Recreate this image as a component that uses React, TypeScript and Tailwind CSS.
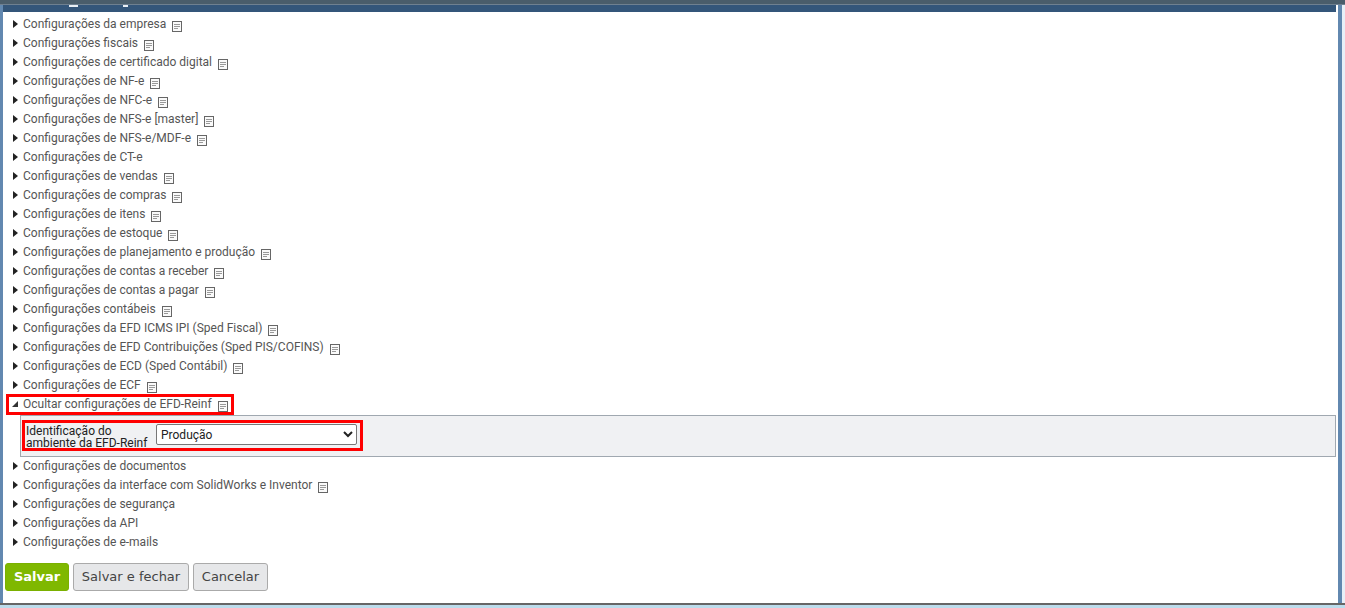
const before = [
  { label: 'Configurações da empresa', doc: true },
  { label: 'Configurações fiscais', doc: true },
  { label: 'Configurações de certificado digital', doc: true },
  { label: 'Configurações de NF-e', doc: true },
  { label: 'Configurações de NFC-e', doc: true },
  { label: 'Configurações de NFS-e [master]', doc: true },
  { label: 'Configurações de NFS-e/MDF-e', doc: true },
  { label: 'Configurações de CT-e', doc: false },
  { label: 'Configurações de vendas', doc: true },
  { label: 'Configurações de compras', doc: true },
  { label: 'Configurações de itens', doc: true },
  { label: 'Configurações de estoque', doc: true },
  { label: 'Configurações de planejamento e produção', doc: true },
  { label: 'Configurações de contas a receber', doc: true },
  { label: 'Configurações de contas a pagar', doc: true },
  { label: 'Configurações contábeis', doc: true },
  { label: 'Configurações da EFD ICMS IPI (Sped Fiscal)', doc: true },
  { label: 'Configurações de EFD Contribuições (Sped PIS/COFINS)', doc: true },
  { label: 'Configurações de ECD (Sped Contábil)', doc: true },
  { label: 'Configurações de ECF', doc: true },
];

const after = [
  { label: 'Configurações de documentos', doc: false },
  { label: 'Configurações da interface com SolidWorks e Inventor', doc: true },
  { label: 'Configurações de segurança', doc: false },
  { label: 'Configurações da API', doc: false },
  { label: 'Configurações de e-mails', doc: false },
];

function DocIcon() {
  return (
    <svg width="10" height="11" viewBox="0 0 10 11" className="ml-[6px] mt-[6px] shrink-0">
      <rect x="0.5" y="0.5" width="9" height="10" fill="#fafafa" stroke="#666" />
      <path d="M2 3.5h6M2 5.5h6M2 7.5h4" stroke="#999" strokeWidth="1" />
    </svg>
  );
}

function Row({ label, doc }: { label: string; doc: boolean }) {
  return (
    <div className="flex h-[19px] items-center pb-[2px] pl-[10px] text-[#555]">
      <span className="mr-[5px] h-0 w-0 border-y-[4px] border-l-[5px] border-y-transparent border-l-[#222]" />
      <span>{label}</span>
      {doc && <DocIcon />}
    </div>
  );
}

export default function App() {
  return (
    <div className="flex h-[608px] flex-col overflow-hidden bg-[#bcdcec] font-['Roboto',sans-serif] text-[12px]">
      <div className="h-[5px] border-b border-[#6f8090] bg-[#4a5d6b]" />
      <div className="flex h-[600px] border-b-2 border-[#666]">
        <div className="w-[3px] bg-[#6288b0]" />
        <div className="flex flex-1 flex-col bg-white">
          {/* bottom edge of the title text, cut off by the scrolled header */}
          <div className="mr-[2px] flex h-[7px] items-start bg-[#34567a]">
            <span className="ml-[66px] h-[2px] w-[9px] bg-[#e8eef4]" />
            <span className="ml-[45px] h-[2px] w-[5px] bg-[#e8eef4]" />
          </div>
          <div className="flex flex-1 flex-col pt-[3px]">
            {before.map((r) => (
              <Row key={r.label} label={r.label} doc={r.doc} />
            ))}
            <div className="ml-[4px] flex h-[19px] w-[226px] items-center whitespace-nowrap pb-[2px] pl-[5px] text-[#555] outline-[3px] -outline-offset-2 outline-[#f00]">
              <span className="mr-[5px] h-0 w-0 border-b-[6px] border-l-[6px] border-b-[#333] border-l-transparent" />
              <span>Ocultar configurações de EFD-Reinf</span>
              <DocIcon />
            </div>
            <div className="ml-[17px] mr-[2px] mt-[1px] h-[42px] border border-[#a0a8b0] bg-[#f0f1f3] pt-[4px] pl-[1px]">
              <div className="flex h-[31px] w-[341px] items-center border-[3px] border-[#f00] pb-[2px] pl-[1px]">
                <label className="mt-[4px] w-[130px] text-[12px] leading-[12px] text-[#222]">
                  Identificação do ambiente da EFD-Reinf
                </label>
                <select className="h-[21px] w-[201px] rounded-[2px] border border-[#777] bg-white text-[12px] text-[#222]">
                  <option>Produção</option>
                </select>
              </div>
            </div>
            {after.map((r) => (
              <Row key={r.label} label={r.label} doc={r.doc} />
            ))}
            <div className="mt-[11px] flex gap-[4px] pl-[2px] font-['DejaVu_Sans',sans-serif]">
              <button className="h-[28px] w-[64px] rounded-[3px] border border-[#7ab000] bg-[#7fb800] text-[13px] font-bold text-white">
                Salvar
              </button>
              <button className="h-[28px] w-[116px] rounded-[3px] border border-[#aaa] bg-[#e6e7e9] text-[13px] text-[#444]">
                Salvar e fechar
              </button>
              <button className="h-[28px] w-[75px] rounded-[3px] border border-[#aaa] bg-[#e6e7e9] text-[13px] text-[#444]">
                Cancelar
              </button>
            </div>
          </div>
        </div>
        <div className="w-[4px] bg-[#6288b0]" />
        <div className="w-[3px] bg-[#e8f0f8]" />
      </div>
    </div>
  );
}
